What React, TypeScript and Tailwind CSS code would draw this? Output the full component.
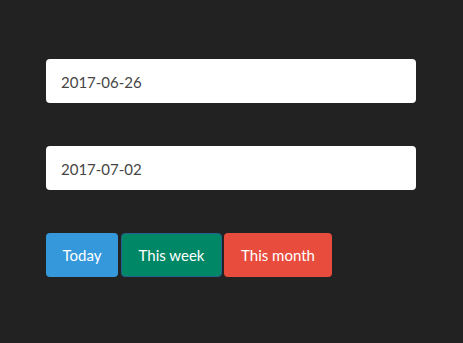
import React from 'react';

// Date range picker with quick-select buttons
const App: React.FC = () => {
  return (
    <div className="min-h-[343px] w-full bg-[#222222] pt-[59px] pl-[46px]" style={{ fontFamily: 'Lato, "Open Sans", sans-serif' }}>
      <div className="w-[370px]">
        <input
          type="text"
          readOnly
          value="2017-06-26"
          className="block h-[44px] w-full rounded-[4px] bg-white px-[15px] pt-[1px] text-[15px] text-[#464545] outline-none"
        />
        <input
          type="text"
          readOnly
          value="2017-07-02"
          className="mt-[43px] block h-[44px] w-full rounded-[4px] bg-white px-[15px] pt-[1px] text-[15px] text-[#464545] outline-none"
        />
        <div className="mt-[43px] flex items-stretch">
          <button className="h-[44px] w-[72px] rounded-[4px] bg-[#3498db] text-[15px] text-white">Today</button>
          <button className="ml-[3px] h-[44px] w-[101px] rounded-[4px] border border-[#24628f] bg-[#008766] text-[15px] text-white">This week</button>
          <button className="ml-[2px] h-[44px] w-[108px] rounded-[4px] bg-[#e74c3c] text-[15px] text-white">This month</button>
        </div>
      </div>
    </div>
  );
};

export default App;
